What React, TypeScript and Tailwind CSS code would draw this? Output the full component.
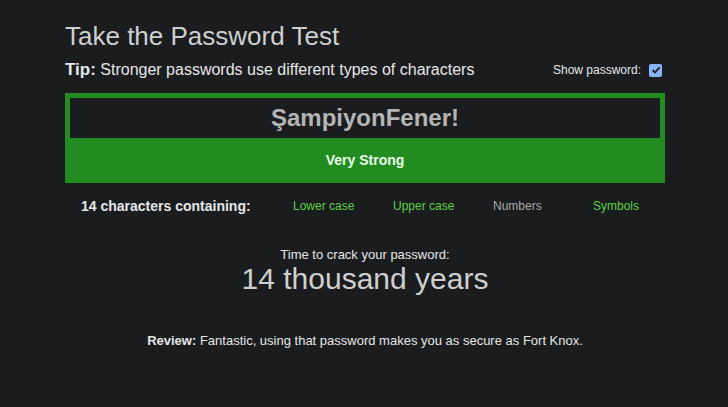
import React from "react";

export default function App() {
  return (
    <div className="min-h-[407px] w-full bg-[#1b1c1e] text-[#d4d4d4]" style={{ fontFamily: '"Liberation Sans", Arial, sans-serif' }}>
      <div className="w-[600px] pt-[20px] ml-[65px]">
        <h1 className="text-[26px] leading-[32px] text-[#cfcfcf]">Take the Password Test</h1>
        <div className="mt-[8px] flex items-center justify-between">
          <div className="text-[16px] leading-[20px] text-[#e6e6e6]">
            <span className="font-bold text-[17px]">Tip:</span> Stronger passwords use different types of characters
          </div>
          <div className="flex items-center gap-[8px] pr-[3px] text-[12px] text-[#e6e6e6]">
            <span>Show password:</span>
            <span className="flex h-[13px] w-[13px] items-center justify-center rounded-[2px] bg-[#8ab4f8]">
              <svg width="10" height="10" viewBox="0 0 10 10">
                <path d="M1.5 5.2 L4 7.5 L8.6 2.4" stroke="#1b1c1e" strokeWidth="1.8" fill="none" />
              </svg>
            </span>
          </div>
        </div>
        <div className="mt-[13px] bg-[#228b22] p-[5px] pb-0 h-[90px]">
          <div className="flex h-[40px] items-center justify-center bg-[#1b1c1e] text-[24px] font-bold text-[#b4b4b4]">
            ŞampiyonFener!
          </div>
          <div className="flex h-[45px] items-center justify-center text-[14px] font-bold text-[#e8ffe8]">Very Strong</div>
        </div>
        <div className="mt-[15px] flex items-center text-[12px] leading-[16px]">
          <div className="w-[228px] shrink-0 pl-[16px] text-[14px] font-bold text-[#e6e6e6]">14 characters containing:</div>
          <div className="w-[100px] shrink-0 text-[#5bd045]">Lower case</div>
          <div className="w-[100px] shrink-0 text-[#5bd045]">Upper case</div>
          <div className="w-[100px] shrink-0 text-[#a8a8a8]">Numbers</div>
          <div className="shrink-0 text-[#5bd045]">Symbols</div>
        </div>
        <div className="mt-[33px] text-center text-[13px] leading-[15px] text-[#e6e6e6]">Time to crack your password:</div>
        <div className="text-center text-[30px] leading-[34px] text-[#cfcfcf]">14 thousand years</div>
        <div className="mt-[37px] text-center text-[13px] leading-[15px] text-[#e6e6e6]">
          <span className="font-bold">Review:</span> Fantastic, using that password makes you as secure as Fort Knox.
        </div>
      </div>
    </div>
  );
}
